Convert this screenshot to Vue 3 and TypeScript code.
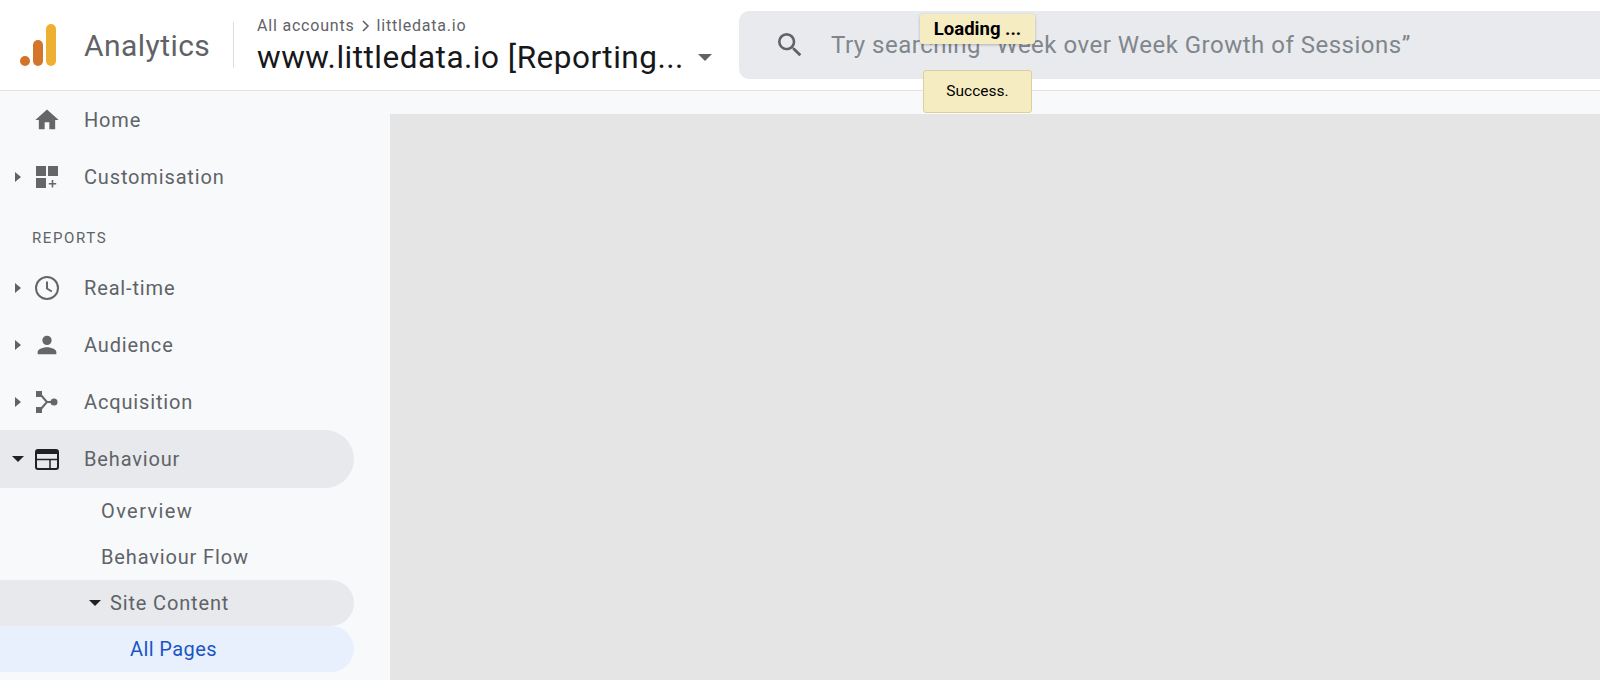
<script setup lang="ts">
interface NavItem {
  label: string
  icon: string
  caret?: 'right' | 'down'
  active?: boolean
}

const topItems: NavItem[] = [
  { label: 'Home', icon: 'home' },
  { label: 'Customisation', icon: 'custom', caret: 'right' },
]

const reportItems: NavItem[] = [
  { label: 'Real-time', icon: 'clock', caret: 'right' },
  { label: 'Audience', icon: 'person', caret: 'right' },
  { label: 'Acquisition', icon: 'acq', caret: 'right' },
  { label: 'Behaviour', icon: 'behaviour', caret: 'down', active: true },
]
</script>

<template>
  <div class="page">
    <header class="topbar">
      <svg class="logo" width="38" height="42" viewBox="0 0 38 42">
        <circle cx="5" cy="37" r="5" fill="#d3742a" />
        <rect x="13" y="16" width="10" height="26" rx="5" fill="#d3762b" />
        <rect x="26" y="0" width="10" height="42" rx="5" fill="#eeb033" />
      </svg>
      <span class="product">Analytics</span>
      <span class="divider"></span>
      <div class="account">
        <div class="crumbs">
          <span>All accounts</span>
          <svg width="10" height="14" viewBox="0 0 10 14"><path d="M2 2l5 5-5 5" fill="none" stroke="#5f6368" stroke-width="1.6" /></svg>
          <span>littledata.io</span>
        </div>
        <div class="view">
          <span>www.littledata.io [Reporting...</span>
          <i class="view-caret"></i>
        </div>
      </div>
      <div class="search">
        <svg width="32" height="32" viewBox="0 0 24 24" fill="#5f6368"><path d="M15.5 14h-.79l-.28-.27A6.47 6.47 0 0 0 16 9.5 6.5 6.5 0 1 0 9.5 16c1.61 0 3.09-.59 4.23-1.57l.27.28v.79l5 4.99L20.49 19l-4.99-5zm-6 0C7.01 14 5 11.99 5 9.5S7.01 5 9.5 5 14 7.01 14 9.5 11.99 14 9.5 14z" /></svg>
        <span class="search-text">Try searching “Week over Week Growth of Sessions”</span>
      </div>
    </header>

    <div class="body">
      <nav class="sidebar">
        <a v-for="item in topItems" :key="item.label" class="row">
          <span class="caret-slot"><i v-if="item.caret" :class="'caret-' + item.caret"></i></span>
          <span class="icon">
            <svg v-if="item.icon === 'home'" width="28" height="28" viewBox="0 0 24 24" fill="#666"><path d="M10 20v-6h4v6h5v-8h3L12 3 2 12h3v8z" /></svg>
            <svg v-else width="22" height="22" viewBox="0 0 22 22" fill="#666"><path d="M0 0h10v10H0zM12 0h10v10H12zM0 12h10v10H0zM15.700 14h1.600v2.900h2.900v1.600h-2.900v2.900h-1.600v-2.900h-2.900v-1.600h2.900z" /></svg>
          </span>
          <span>{{ item.label }}</span>
        </a>

        <div class="section">REPORTS</div>

        <a v-for="item in reportItems" :key="item.label" class="row" :class="{ 'row--active': item.active }">
          <span class="caret-slot"><i :class="'caret-' + item.caret"></i></span>
          <span class="icon">
            <svg v-if="item.icon === 'clock'" width="28" height="28" viewBox="0 0 28 28" fill="none" stroke="#666" stroke-width="2"><circle cx="14" cy="14" r="11" /><path d="M14 7.500V14.500l4.800 3" /></svg>
            <svg v-else-if="item.icon === 'person'" width="28" height="28" viewBox="0 0 24 24" fill="#666"><path d="M12 12a4 4 0 1 0 0-8 4 4 0 0 0 0 8zm0 2c-2.700 0-8 1.340-8 4v2h16v-2c0-2.660-5.300-4-8-4z" /></svg>
            <svg v-else-if="item.icon === 'acq'" width="24" height="24" viewBox="0 0 24 24" fill="#666"><path d="M1 1h6v6H1zM1 17h6v6H1z" /><circle cx="19" cy="12" r="3.500" /><path d="M5 4l7 8-7 8" fill="none" stroke="#666" stroke-width="2" /><path d="M12 12h6" stroke="#666" stroke-width="2" /></svg>
            <svg v-else width="24" height="21" viewBox="0 0 24 21"><rect x="1" y="1" width="22" height="19" rx="2" fill="none" stroke="#202124" stroke-width="2" /><path d="M1 1h22v4H1z" fill="#202124" /><path d="M2 10.500h20M15 10.500V20" stroke="#202124" stroke-width="1.500" /></svg>
          </span>
          <span>{{ item.label }}</span>
        </a>

        <a class="sub sub--wide">Overview</a>
        <a class="sub">Behaviour Flow</a>
        <a class="sub sub--open"><i class="caret-down"></i>Site Content</a>
        <a class="sub sub--current">All Pages</a>
      </nav>

      <main class="content">
        <div class="canvas"></div>
      </main>
    </div>

    <div class="toast toast--loading">Loading ...</div>
    <div class="toast toast--success">Success.</div>
  </div>
</template>

<style>
body {
  margin: 0;
  background: #f8f9fb;
}
</style>

<style scoped>
.page {
  position: relative;
  width: 1600px;
  height: 680px;
  overflow: hidden;
  font-family: Roboto, "Noto Sans", sans-serif;
  color: #5f6368;
}

.topbar {
  display: flex;
  align-items: center;
  height: 90px;
  background: #fff;
  border-bottom: 1px solid #e3e4e6;
  box-sizing: content-box;
}

.logo {
  margin-left: 20px;
  flex: none;
}

.product {
  margin-left: 26px;
  font-size: 30px;
  width: 125px;
  white-space: nowrap;
  letter-spacing: 0.45px;
}

.divider {
  width: 1px;
  height: 46px;
  margin-left: 24px;
  background: #dcdddf;
}

.account {
  margin-left: 23px;
  padding-top: 2px;
  width: 482px;
  flex: none;
}

.crumbs {
  display: flex;
  align-items: center;
  gap: 6px;
  font-size: 16px;
  line-height: 20px;
  letter-spacing: 0.8px;
}

.view {
  display: flex;
  align-items: center;
  margin-top: 3px;
  font-size: 31.500px;
  line-height: 38px;
  letter-spacing: 0.5px;
  color: #16181a;
  white-space: nowrap;
}

.view-caret {
  margin-left: 14px;
  border-top: 7px solid #5f6368;
  border-left: 7.5px solid transparent;
  border-right: 7.5px solid transparent;
}

.search {
  display: flex;
  align-items: center;
  gap: 25px;
  flex: 1;
  height: 68px;
  padding-left: 35px;
  border-radius: 10px 0 0 10px;
  background: #e8eaed;
}

.search-text {
  font-size: 24px;
  letter-spacing: 0.5px;
  color: #80868b;
  white-space: nowrap;
}

.body {
  display: flex;
  height: 589px;
}

.sidebar {
  width: 390px;
  flex: none;
  background: #f8f9fb;
  font-size: 20px;
  letter-spacing: 0.85px;
}

.row {
  display: flex;
  align-items: center;
  width: 354px;
  height: 57.100px;
}

.row--active {
  background: #e8e9ec;
  border-radius: 0 29px 29px 0;
}

.caret-slot {
  display: flex;
  justify-content: center;
  width: 36px;
  flex: none;
}

.caret-right {
  border-left: 6px solid #5f6368;
  border-top: 5.500px solid transparent;
  border-bottom: 5.500px solid transparent;
}

.caret-down {
  border-top: 6px solid #202124;
  border-left: 6px solid transparent;
  border-right: 6px solid transparent;
}

.icon {
  display: flex;
  justify-content: center;
  width: 28px;
  margin-left: -3.500px;
  margin-right: 23.500px;
  flex: none;
}

.section {
  padding: 24px 0 0 32px;
  height: 30px;
  box-sizing: content-box;
  font-size: 15px;
  line-height: 18px;
  letter-spacing: 1.600px;
}

.sub {
  display: flex;
  align-items: center;
  width: 354px;
  height: 46px;
  padding-left: 101px;
  box-sizing: border-box;
}

.sub--wide {
  letter-spacing: 1.400px;
}

.sub--open {
  padding-left: 89px;
  background: #e8e9ec;
  border-radius: 0 23px 23px 0;
}

.sub--open .caret-down {
  margin-right: 9px;
}

.sub--current {
  padding-left: 130px;
  color: #1a56c4;
  letter-spacing: 0.4px;
  background: #e8f0fe;
  border-radius: 0 23px 23px 0;
}

.content {
  flex: 1;
  padding-top: 23px;
  background: #f8f9fb;
}

.canvas {
  height: 100%;
  background: #e5e5e5;
}

.toast {
  position: absolute;
  left: 50%;
  box-sizing: border-box;
  background: #f6ecc1;
  color: #000;
  text-align: center;
}

.toast--loading {
  top: 14px;
  margin-left: 120px;
  width: 115px;
  height: 30px;
  font-size: 18.500px;
  font-weight: 700;
  line-height: 30px;
  border-radius: 3px;
  box-shadow: 0 1px 3px rgba(0, 0, 0, 0.25);
}

.toast--success {
  top: 70px;
  margin-left: 123px;
  width: 109px;
  height: 43px;
  font-size: 15.500px;
  line-height: 41px;
  border: 1px solid #dccf9f;
  border-radius: 3px;
}
</style>
